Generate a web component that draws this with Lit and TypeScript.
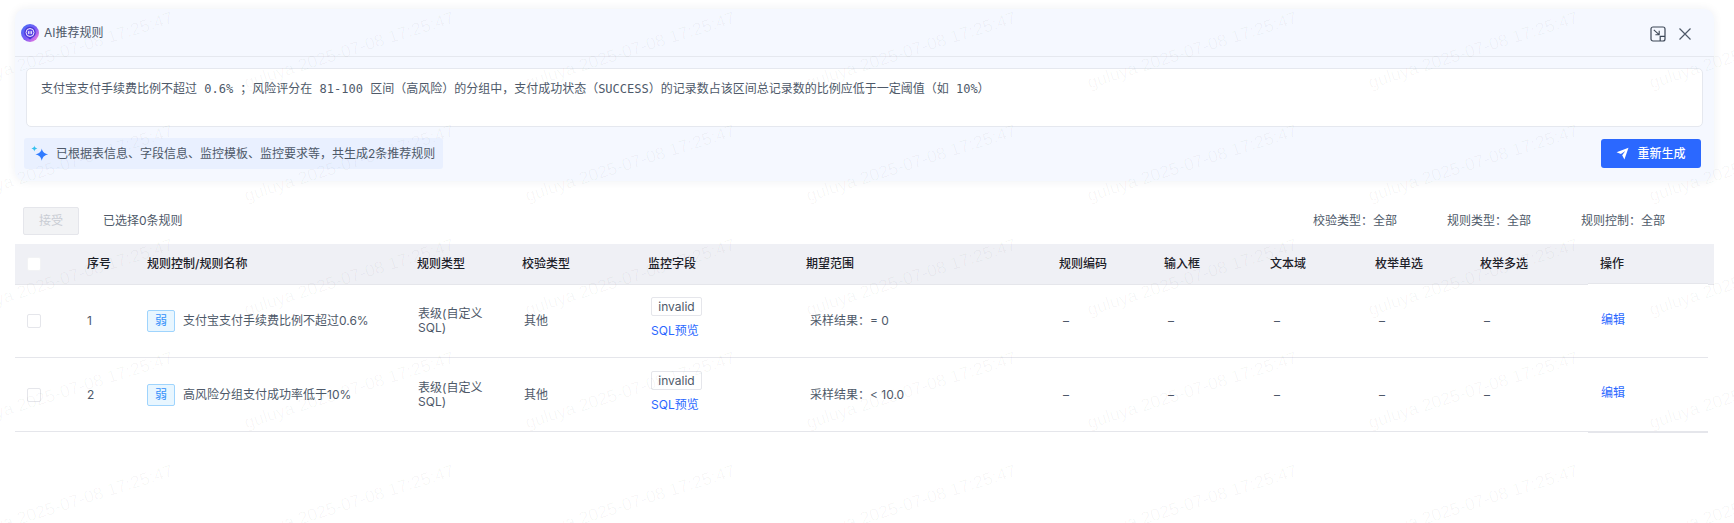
import { LitElement, html, css, svg } from "lit";
import { customElement } from "lit/decorators.js";

const rows = [
  { no: "1", name: "支付宝支付手续费比例不超过0.6%", range: "采样结果：= 0" },
  { no: "2", name: "高风险分组支付成功率低于10%", range: "采样结果：< 10.0" },
];
const marks: { x: number; y: number }[] = [];
for (const y of [50, 163, 277, 390, 503]) {
  for (const x of [68, 349, 630, 911, 1192, 1473, 1754]) marks.push({ x, y });
}

@customElement("app-root")
export class AppRoot extends LitElement {
  static styles = css`
    :host {
      display: block;
      position: relative;
      height: 523px;
      overflow: hidden;
      box-sizing: border-box;
      padding: 9px 20px 0 15px;
      background: #fff;
      font: 12px/18px Inter, "Noto Sans CJK SC", sans-serif;
      color: #4e5969;
    }
    .panel {
      height: 172px;
      box-sizing: border-box;
      background: #f5f8ff;
      border-radius: 10px;
      box-shadow: 0 0 10px rgba(30, 40, 80, 0.07);
    }
    .head {
      height: 48px;
      box-sizing: border-box;
      border-bottom: 1px solid #e5e8ef;
      display: flex;
      align-items: center;
      padding: 0 22px 0 6px;
      gap: 5px;
    }
    .title { flex: 1; color: #4e5969; }
    .head-icons { display: flex; align-items: center; gap: 12px; padding-top: 2px; }
    .head-icons svg { display: block; }
    .area {
      margin: 11px 11px 0;
      height: 59px;
      box-sizing: border-box;
      background: #fff;
      border: 1px solid #e5e8ef;
      border-radius: 5px;
      padding: 11px 14px 0;
      font-family: "DejaVu Sans Mono", "Noto Sans CJK SC", monospace;
      color: #4e5969;
      white-space: pre;
    }
    .foot {
      margin-top: 11px;
      padding: 0 13px 0 9px;
      display: flex;
      align-items: center;
      justify-content: space-between;
    }
    .chip {
      height: 31px;
      width: 419px;
      box-sizing: border-box;
      background: #e9f0ff;
      border-radius: 3px;
      display: flex;
      align-items: center;
      gap: 7px;
      padding-left: 7px;
      white-space: nowrap;
    }
    .regen {
      width: 100px;
      height: 29px;
      background: #2b68ff;
      color: #fff;
      border-radius: 3px;
      display: flex;
      align-items: center;
      justify-content: center;
      gap: 8px;
      font-weight: 500;
    }
    .bar {
      margin-top: 26px;
      height: 28px;
      display: flex;
      align-items: center;
      padding: 0 0 0 8px;
    }
    .accept {
      width: 56px;
      height: 28px;
      box-sizing: border-box;
      background: #f2f3f5;
      border: 1px solid #e5e6eb;
      border-radius: 2px;
      color: #c9cdd4;
      display: flex;
      align-items: center;
      justify-content: center;
    }
    .count { margin-left: 24px; flex: 1; }
    .filters { display: flex; gap: 50px; padding-right: 49px; }
    .table { margin-top: 9px; }
    .row {
      display: grid;
      grid-template-columns: 60px 60px 270px 105px 126px 158px 253px 105px 106px 105px 105px 120px 120px 6px;
    }
    .th {
      background: #eff0f5;
      height: 41px;
      box-sizing: border-box;
      border-bottom: 1px solid #e5e6eb;
      padding-left: 12px;
      display: flex;
      align-items: center;
      color: #1d2129;
      font-weight: 500;
      white-space: nowrap;
    }
    .th.wide { padding-left: 0; }
    .td {
      height: 73px;
      box-sizing: border-box;
      border-bottom: 1px solid #e5e6eb;
      display: flex;
      align-items: center;
      padding-left: 16px;
    }
    .td.seq, .td.name { padding-left: 12px; }
    .td.type { padding-left: 13px; padding-right: 16px; line-height: 14px; }
    .td.check { padding-left: 14px; }
    .td.field {
      flex-direction: column;
      align-items: flex-start;
      justify-content: flex-start;
      padding-top: 12px;
      padding-left: 15px;
    }
    .td.op {
      background: #fff;
      margin-top: -1px;
      margin-bottom: 1px;
      padding-left: 13px;
      color: #2b68ff;
    }
    .first .op { margin-top: -2px; height: 75px; border-top: 1px solid #e5e6eb; padding-bottom: 1px; }
    .last .op { margin-bottom: 0; height: 75px; border-bottom-width: 2px; padding-bottom: 3px; }
    .spacer { height: 73px; }
    .box {
      width: 14px;
      height: 14px;
      box-sizing: border-box;
      background: #fff;
      border: 1px solid #e5e6eb;
      border-radius: 2px;
    }
    .cb { padding-left: 12px; }
    .th.cb .box { border-color: #f2f3f5; }
    .level {
      width: 28px;
      height: 22px;
      box-sizing: border-box;
      background: #e8f6ff;
      border: 1px solid #9fd4fd;
      border-radius: 2px;
      color: #3491fa;
      display: flex;
      align-items: center;
      justify-content: center;
      margin-right: 8px;
      flex: none;
    }
    .tag {
      width: 51px;
      height: 19px;
      box-sizing: border-box;
      border: 1px solid #e5e6eb;
      border-radius: 2px;
      display: flex;
      align-items: center;
      justify-content: center;
      background: #fff;
    }
    .link { color: #2b68ff; margin-top: 6px; }
    .marks {
      position: absolute;
      inset: 0;
      pointer-events: none;
    }
    .mark {
      position: absolute;
      transform: translate(-50%, -50%) rotate(-17.5deg);
      font: 17.5px/20px "Liberation Sans", sans-serif;
      color: rgba(0, 0, 0, 0.035);
      white-space: nowrap;
    }
  `;

  private logo() {
    return svg`<svg width="18" height="18" viewBox="0 0 18 18">
      <defs><linearGradient id="lg" x1="0.1" y1="0.1" x2="0.9" y2="0.9">
        <stop offset="0" stop-color="#4a6cf7"/><stop offset=".55" stop-color="#7c5cf5"/><stop offset="1" stop-color="#f07ae0"/>
      </linearGradient></defs>
      <circle cx="9" cy="9" r="9" fill="url(#lg)"/>
      <path d="M9 2.8a5.7 5.7 0 0 1 3.9 9.8L9 15.6l-3.9-3A5.7 5.7 0 0 1 9 2.8z" fill="#4a35d6"/>
      <circle cx="9" cy="8.5" r="4" fill="#5a45e6" stroke="#efeaff" stroke-width="1"/>
      <rect x="7.2" y="6.9" width="1.2" height="3.2" rx=".6" fill="#fff"/>
      <rect x="9.6" y="6.9" width="1.2" height="3.2" rx=".6" fill="#fff"/>
    </svg>`;
  }

  render() {
    return html`
      <div class="panel">
        <div class="head">
          ${this.logo()}
          <span class="title">AI推荐规则</span>
          <div class="head-icons">
            <svg width="16" height="16" viewBox="0 0 16 16" fill="none" stroke="#3d4757" stroke-width="1.2">
              <rect x="1" y="1" width="14" height="14" rx="2"/>
              <path d="M3.8 3.8l5 4.6M9.2 4.8v3.9H5.4" stroke-width="1.1"/>
              <path d="M10.2 15v-4.6H15" />
            </svg>
            <svg width="14" height="14" viewBox="0 0 14 14" fill="none" stroke="#4e5969" stroke-width="1.2">
              <path d="M1.5 1.5l11 11M12.5 1.5l-11 11"/>
            </svg>
          </div>
        </div>
        <div class="area">支付宝支付手续费比例不超过 0.6% ；风险评分在 81-100 区间（高风险）的分组中，支付成功状态（SUCCESS）的记录数占该区间总记录数的比例应低于一定阈值（如 10%）</div>
        <div class="foot">
          <div class="chip">
            <svg width="18" height="18" viewBox="0 0 18 18">
              <path d="M10.8 3.6c.7 3.3 2.2 4.9 6.4 5.8-4.2.9-5.7 2.5-6.4 6.4-.7-3.9-2.2-5.5-6.4-6.4 4.2-.9 5.7-2.5 6.4-5.8z" fill="#2f7bff"/>
              <path d="M3.4 .4c.3 1.8 1 2.6 3 3-2 .4-2.7 1.3-3 3.1C3.1 4.7 2.4 3.8.4 3.4c2-.4 2.7-1.2 3-3z" fill="#35c0ee"/>
            </svg>
            <span>已根据表信息、字段信息、监控模板、监控要求等，共生成2条推荐规则</span>
          </div>
          <div class="regen">
            <svg width="13" height="13" viewBox="0 0 13 13"><path d="M12.5 .8L8.4 12.6 6.2 8.2 9.3 4 4.9 6.9.5 5.2z" fill="#fff"/></svg>
            <span>重新生成</span>
          </div>
        </div>
      </div>
      <div class="bar">
        <div class="accept">接受</div>
        <div class="count">已选择0条规则</div>
        <div class="filters">
          <span>校验类型：全部</span><span>规则类型：全部</span><span>规则控制：全部</span>
        </div>
      </div>
      <div class="table">
        <div class="row">
          <div class="th cb"><div class="box"></div></div>
          <div class="th">序号</div>
          <div class="th">规则控制/规则名称</div>
          <div class="th">规则类型</div>
          <div class="th">校验类型</div>
          <div class="th">监控字段</div>
          <div class="th">期望范围</div>
          <div class="th">规则编码</div>
          <div class="th">输入框</div>
          <div class="th">文本域</div>
          <div class="th">枚举单选</div>
          <div class="th">枚举多选</div>
          <div class="th">操作</div>
          <div class="th wide"></div>
        </div>
        ${rows.map(
          (r, i) => html`
            <div class="row ${i === 0 ? "first" : "last"}">
              <div class="td cb"><div class="box"></div></div>
              <div class="td seq">${r.no}</div>
              <div class="td name"><span class="level">弱</span><span>${r.name}</span></div>
              <div class="td type">表级(自定义SQL)</div>
              <div class="td check">其他</div>
              <div class="td field"><span class="tag">invalid</span><span class="link">SQL预览</span></div>
              <div class="td">${r.range}</div>
              <div class="td">–</div>
              <div class="td">–</div>
              <div class="td">–</div>
              <div class="td">–</div>
              <div class="td">–</div>
              <div class="td op">编辑</div>
              <div class="spacer"></div>
            </div>
          `
        )}
      </div>
      <div class="marks">
        ${marks.map(
          (m) => html`<span class="mark" style="left:${m.x}px;top:${m.y}px">guluya 2025-07-08 17:25:47</span>`
        )}
      </div>
    `;
  }
}
